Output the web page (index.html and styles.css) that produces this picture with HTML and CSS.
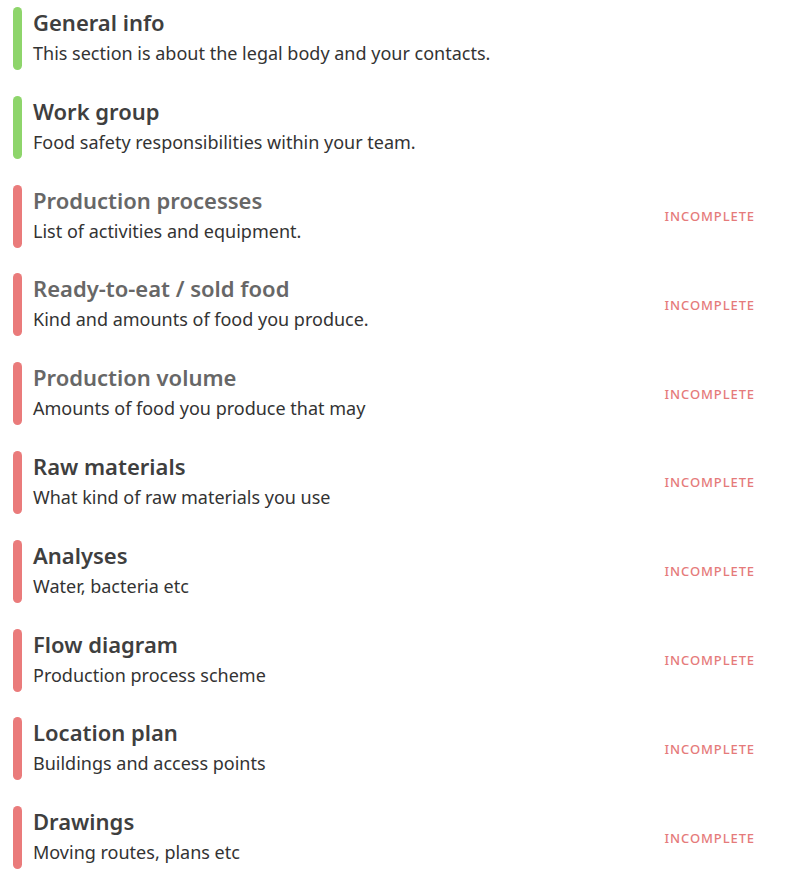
FILE: index.html
```html
<!DOCTYPE html>
<html lang="en">
<head>
    <meta charset="UTF-8">
    <title>Sections</title>
    <link rel="stylesheet" href="styles.css">
</head>
<body>
    <!-- Section list -->
    <ul class="sections">
        <li class="section done">
            <div class="section-text">
                <div class="section-title">General info</div>
                <div class="section-desc">This section is about the legal body and your contacts.</div>
            </div>
        </li>
        <li class="section done">
            <div class="section-text">
                <div class="section-title">Work group</div>
                <div class="section-desc">Food safety responsibilities within your team.</div>
            </div>
        </li>
        <li class="section todo muted">
            <div class="section-text">
                <div class="section-title">Production processes</div>
                <div class="section-desc">List of activities and equipment.</div>
            </div>
            <span class="status">Incomplete</span>
        </li>
        <li class="section todo muted">
            <div class="section-text">
                <div class="section-title">Ready-to-eat / sold food</div>
                <div class="section-desc">Kind and amounts of food you produce.</div>
            </div>
            <span class="status">Incomplete</span>
        </li>
        <li class="section todo muted">
            <div class="section-text">
                <div class="section-title">Production volume</div>
                <div class="section-desc">Amounts of food you produce that may</div>
            </div>
            <span class="status">Incomplete</span>
        </li>
        <li class="section todo">
            <div class="section-text">
                <div class="section-title">Raw materials</div>
                <div class="section-desc">What kind of raw materials you use</div>
            </div>
            <span class="status">Incomplete</span>
        </li>
        <li class="section todo">
            <div class="section-text">
                <div class="section-title">Analyses</div>
                <div class="section-desc">Water, bacteria etc</div>
            </div>
            <span class="status">Incomplete</span>
        </li>
        <li class="section todo">
            <div class="section-text">
                <div class="section-title">Flow diagram</div>
                <div class="section-desc">Production process scheme</div>
            </div>
            <span class="status">Incomplete</span>
        </li>
        <li class="section todo">
            <div class="section-text">
                <div class="section-title">Location plan</div>
                <div class="section-desc">Buildings and access points</div>
            </div>
            <span class="status">Incomplete</span>
        </li>
        <li class="section todo">
            <div class="section-text">
                <div class="section-title">Drawings</div>
                <div class="section-desc">Moving routes, plans etc</div>
            </div>
            <span class="status">Incomplete</span>
        </li>
    </ul>
</body>
</html>
```

FILE: styles.css
```css
/* Base */
body {
    margin: 0;
    background: #fff;
    font-family: "Noto Sans", Arial, sans-serif;
    color: #3f3f3f;
}

/* Section list */
.sections {
    list-style: none;
    margin: 0;
    padding: 7px 45px 0 13px;
    display: flex;
    flex-direction: column;
    gap: 25.8px;
}

.section {
    display: flex;
    align-items: center;
    height: 63px;
}

.section::before {
    content: "";
    align-self: stretch;
    width: 9px;
    border-radius: 5px;
    margin-right: 11px;
}

.section.done::before {
    background: #8ed56b;
}

.section.todo::before {
    background: #ea7b7b;
}

.section-text {
    flex: 1;
    align-self: flex-start;
}

.section-title {
    font-size: 22px;
    font-weight: 600;
    line-height: 30px;
    color: #3f3f3f;
}

.muted .section-title {
    color: #676767;
}

.section-desc {
    font-size: 18px;
    line-height: 30px;
    margin-top: 1px;
    color: #333;
}

/* Status label */
.status {
    font-size: 13px;
    font-weight: 500;
    letter-spacing: 0.9px;
    text-transform: uppercase;
    color: #e57a7a;
}
```
